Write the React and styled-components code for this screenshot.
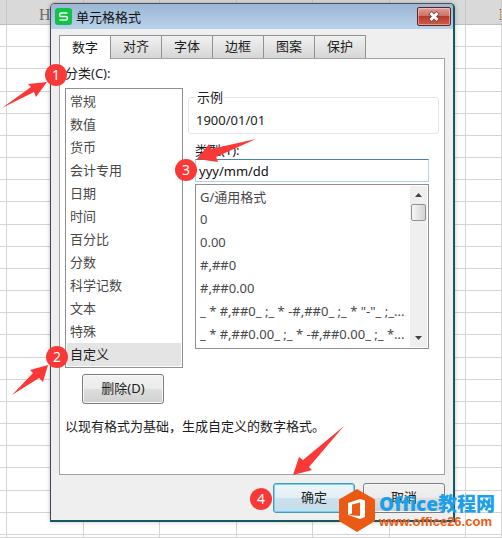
import React, { useState } from 'react';
import styled, { createGlobalStyle } from 'styled-components';

const TABS = ['数字', '对齐', '字体', '边框', '图案', '保护'];

const CATEGORIES = [
    '常规',
    '数值',
    '货币',
    '会计专用',
    '日期',
    '时间',
    '百分比',
    '分数',
    '科学记数',
    '文本',
    '特殊',
    '自定义',
];

const FORMATS = [
    'G/通用格式',
    '0',
    '0.00',
    '#,##0',
    '#,##0.00',
    '_ * #,##0_ ;_ * -#,##0_ ;_ * "-"_ ;_...',
    '_ * #,##0.00_ ;_ * -#,##0.00_ ;_ *...',
];

// 中间的列被对话框挡住，不需要列名
const COLUMNS = ['', 'H', '', '', '', '', '', 'N'];
const ROW_COUNT = 24;

const GlobalStyle = createGlobalStyle`
    * {
        box-sizing: border-box;
    }

    body {
        margin: 0;
        background: #fff;
    }

    body, button, input, select {
        font-family: 'Noto Sans', 'Noto Sans CJK SC', sans-serif;
        font-size: 13px;
        line-height: 18px;
        color: #1c1c1c;
    }
`;

const Page = styled.div`
    position: relative;
    min-height: 100vh;
    padding: 3px 47px 16px 50px;
    overflow: hidden;
`;

/* 背景工作表 */
const Sheet = styled.div`
    position: absolute;
    inset: 0;
    display: grid;
    grid-template-columns: 7px repeat(6, 1fr) 36px;
    grid-template-rows: 25px repeat(23, 1fr) 3px;
`;

const ColumnHead = styled.div`
    display: flex;
    justify-content: ${(props) => (props.$clipped ? 'flex-start' : 'center')};
    align-items: flex-end;
    overflow: hidden;
    background: #d9d9d9;
    border-bottom: 1px solid #bdbdbd;
    border-right: 1px solid #c6c6c6;
    font-family: 'Liberation Serif', serif;
    font-size: 16px;
    color: ${(props) => (props.$clipped ? '#a0543c' : '#6b6b6b')};

    span {
        flex: none;
        min-width: 77px;
        text-align: center;
    }
`;

const Cell = styled.div`
    border-right: 1px solid #d4d4d4;
    border-bottom: 1px solid #d4d4d4;
`;

const Dialog = styled.section`
    position: relative;
    border: 2px solid;
    border-color: #47535e #155865 #155865 #3f4852;
    border-top-width: 1px;
    border-left-width: 1px;
    border-radius: 5px 5px 0 0;
    background: #efefef;
    box-shadow: 0 0 4px rgba(0, 0, 0, 0.25);
`;

const TitleBar = styled.header`
    display: flex;
    align-items: center;
    gap: 4px;
    height: 25px;
    padding: 0 2px 0 4px;
    border-radius: 4px 4px 0 0;
    background: linear-gradient(#9bb7d4, #b9d1ea);

    h1 {
        flex: 1;
        margin: 0;
        font-size: 13px;
        font-weight: 400;
        color: #111;
    }
`;

const CloseButton = styled.button`
    display: flex;
    align-items: center;
    justify-content: center;
    width: 34px;
    height: 19px;
    padding: 0;
    border: 1px solid #5b2522;
    border-radius: 2px;
    box-shadow: inset 0 0 0 1px rgba(255, 220, 210, 0.5);
    background: linear-gradient(#dea094 0%, #cf7264 45%, #b93a2a 50%, #cf5b48 100%);
`;

const Body = styled.div`
    padding: 6px 8px 7px;
`;

const TabList = styled.div`
    display: flex;
    align-items: flex-end;
`;

const Tab = styled.button`
    position: relative;
    width: ${(props) => (props.$active ? '52px' : '51px')};
    height: ${(props) => (props.$active ? '24px' : '23px')};
    margin-bottom: ${(props) => (props.$active ? '-1px' : '0')};
    padding: 0 0 2px;
    border: 1px solid #929292;
    border-left-width: ${(props) => (props.$first ? '1px' : '0')};
    border-bottom: none;
    background: ${(props) => (props.$active ? '#fff' : 'linear-gradient(#f1f1f1, #d6d6d6)')};
    z-index: ${(props) => (props.$active ? 1 : 0)};
`;

const Panel = styled.div`
    padding: 5px 5px 39px;
    border: 1px solid #a2a2a2;
    background: #fff;
`;

const FieldLabel = styled.label`
    display: block;
`;

const Columns = styled.div`
    display: flex;
    align-items: flex-start;
    gap: 5px;
    margin-top: 6px;
`;

const ListBox = styled.select`
    display: block;
    flex: 1;
    min-width: 0;
    height: ${(props) => props.size * 23}px;
    padding: 0;
    border: none;
    outline: none;
    overflow: hidden;
    background: #fff;

    option {
        height: 23px;
        padding: 1px 0 3px 3px;
        line-height: 18px;
        color: #484848;
        overflow: hidden;
    }

    option:checked {
        background: linear-gradient(#e4e4e4, #e4e4e4);
        color: #1c1c1c;
    }
`;

const ListFrame = styled.div`
    display: flex;
    width: ${(props) => props.$width || 'auto'};
    padding: 1px;
    border: 1px solid #909090;
    background: #fff;
`;

const Details = styled.div`
    flex: 1;
    min-width: 0;
`;

const Sample = styled.fieldset`
    min-width: 0;
    height: 46px;
    margin: 0;
    padding: 5px 7px 0;
    border: 1px solid #dfe7ea;
    border-radius: 3px;

    legend {
        padding: 0 1px;
    }
`;

const TypeField = styled.div`
    margin: 7px 10px 0 7px;
`;

const TypeInput = styled.input`
    display: block;
    width: 100%;
    height: 23px;
    margin-bottom: 2px;
    padding: 0 3px;
    border: 1px solid #b5d3e7;
    border-top-color: #4a80b5;
    outline: none;
    color: #111;
`;

const ScrollBar = styled.div`
    display: flex;
    flex-direction: column;
    align-items: center;
    width: 17px;
    background: #efefef;
`;

const ScrollArrow = styled.button`
    display: flex;
    align-items: center;
    justify-content: center;
    width: 100%;
    height: 18px;
    padding: 0;
    border: none;
    background: transparent;
`;

const ScrollThumb = styled.div`
    width: 15px;
    height: 17px;
    margin-bottom: auto;
    border: 1px solid #929292;
    border-radius: 2px;
    background: linear-gradient(to right, #f6f6f6, #d2d2d4);
`;

const Button = styled.button`
    width: 82px;
    height: 30px;
    padding: 0 0 2px;
    border: 1px solid ${(props) => (props.$primary ? '#4399bd' : '#7c7c7c')};
    border-radius: 3px;
    box-shadow: inset 0 0 0 1px ${(props) => (props.$primary ? '#6fd3f3' : '#f8f8f8')};
    background: ${(props) =>
        props.$primary
            ? 'linear-gradient(#edf5f9 0%, #e2eff6 48%, #cbe1ed 52%, #c5dcea 100%)'
            : 'linear-gradient(#f2f2f2 0%, #ebebeb 48%, #dddddd 52%, #d0d0d0 100%)'};
`;

const DeleteRow = styled.div`
    padding: 6px 17px 13px;
`;

const Hint = styled.p`
    margin: 0;
`;

const Actions = styled.footer`
    display: flex;
    justify-content: flex-end;
    gap: 8px;
    padding-top: 8px;
`;

/* 步骤标注 */
const Arrows = styled.svg`
    position: absolute;
    top: 0;
    left: 0;
    pointer-events: none;
`;

const StepBadge = styled.span`
    position: absolute;
    top: ${(props) => props.$y}px;
    left: ${(props) => props.$x}px;
    width: 22px;
    height: 22px;
    border-radius: 50%;
    background: #fb3838;
    color: #fff;
    font-size: 14px;
    line-height: 21px;
    text-align: center;
`;

const Watermark = styled.div`
    position: absolute;
    right: 7px;
    bottom: 6px;
    display: flex;
    align-items: flex-end;
    gap: 4px;
    pointer-events: none;
`;

const WatermarkText = styled.div`
    padding-bottom: 2px;
    font-weight: 700;

    strong {
        display: block;
        font-size: 19px;
        line-height: 20px;
        color: #1b9fe8;
    }

    span {
        display: block;
        font-family: 'Liberation Sans', sans-serif;
        font-size: 13px;
        line-height: 16px;
        color: #ea5b12;
    }
`;

const AppIcon = () => (
    <svg width="17" height="17" viewBox="0 0 17 17" aria-hidden="true">
        <rect width="17" height="17" rx="3" fill="#12c148" />
        <path
            d="M12.5 5H6.2Q4.6 5 4.6 6.8T6.2 8.5H10.8Q12.4 8.5 12.4 10.2T10.8 12H4.4"
            fill="none"
            stroke="#e9ffe9"
            strokeWidth="1.7"
        />
    </svg>
);

const OfficeLogo = () => (
    <svg width="36" height="43" viewBox="0 0 36 43" aria-hidden="true">
        <path d="M18 0 36 10.5V32L18 43 0 32V10.5Z" fill="#ea5a14" />
        <path
            d="M9 14 21 10 26 11.5V28L21 30 9 26 21 27V13.5L13 15.5V24.5L9 26Z"
            fill="#fff"
        />
    </svg>
);

const App = () => {
    const [tab, setTab] = useState('数字');
    const [category, setCategory] = useState('自定义');
    const [format, setFormat] = useState('');
    const [type, setType] = useState('yyy/mm/dd');

    const handleFormatChange = (e) => {
        setFormat(e.target.value);
        setType(e.target.value);
    };

    return (
        <Page>
            <GlobalStyle />
            <Sheet aria-hidden="true">
                {COLUMNS.map((name, i) => (
                    <ColumnHead key={i} $clipped={i === COLUMNS.length - 1}>
                        {name && <span>{name}</span>}
                    </ColumnHead>
                ))}
                {Array.from({ length: ROW_COUNT * COLUMNS.length }, (_, i) => (
                    <Cell key={i} />
                ))}
            </Sheet>

            <Dialog role="dialog" aria-labelledby="dialog-title">
                <TitleBar>
                    <AppIcon />
                    <h1 id="dialog-title">单元格格式</h1>
                    <CloseButton type="button" aria-label="关闭">
                        <svg width="12" height="11" viewBox="0 0 12 11">
                            <path d="M2 1.5 10 9.5M10 1.5 2 9.5" stroke="#6d4a48" strokeWidth="4.4" />
                            <path d="M2.5 2 9.5 9M9.5 2 2.5 9" stroke="#fff" strokeWidth="2.8" />
                        </svg>
                    </CloseButton>
                </TitleBar>

                <Body>
                    <TabList role="tablist">
                        {TABS.map((name, i) => (
                            <Tab
                                key={name}
                                type="button"
                                role="tab"
                                aria-selected={tab === name}
                                $active={tab === name}
                                $first={i === 0}
                                onClick={() => setTab(name)}
                            >
                                {name}
                            </Tab>
                        ))}
                    </TabList>

                    <Panel role="tabpanel">
                        <FieldLabel htmlFor="category">分类(C):</FieldLabel>
                        <Columns>
                            <ListFrame $width="118px">
                                <ListBox
                                    id="category"
                                    size={12}
                                    value={category}
                                    onChange={(e) => setCategory(e.target.value)}
                                >
                                    {CATEGORIES.map((name) => (
                                        <option key={name}>{name}</option>
                                    ))}
                                </ListBox>
                            </ListFrame>

                            <Details>
                                <Sample>
                                    <legend>示例</legend>
                                    1900/01/01
                                </Sample>
                                <TypeField>
                                    <FieldLabel htmlFor="type">类型(T):</FieldLabel>
                                    <TypeInput
                                        id="type"
                                        value={type}
                                        onChange={(e) => setType(e.target.value)}
                                    />
                                    <ListFrame>
                                        <ListBox
                                            aria-label="类型"
                                            size={7}
                                            value={format}
                                            onChange={handleFormatChange}
                                        >
                                            {/* 初始不选中任何格式 */}
                                            <option value="" hidden />
                                            {FORMATS.map((name) => (
                                                <option key={name}>{name}</option>
                                            ))}
                                        </ListBox>
                                        <ScrollBar>
                                            <ScrollArrow type="button" aria-label="向上">
                                                <svg width="7" height="4" viewBox="0 0 7 4">
                                                    <path d="M0 4 3.5 0 7 4Z" fill="#444" />
                                                </svg>
                                            </ScrollArrow>
                                            <ScrollThumb />
                                            <ScrollArrow type="button" aria-label="向下">
                                                <svg width="7" height="4" viewBox="0 0 7 4">
                                                    <path d="M0 0 3.5 4 7 0Z" fill="#444" />
                                                </svg>
                                            </ScrollArrow>
                                        </ScrollBar>
                                    </ListFrame>
                                </TypeField>
                            </Details>
                        </Columns>
                        <DeleteRow>
                            <Button type="button">删除(D)</Button>
                        </DeleteRow>
                        <Hint>以现有格式为基础，生成自定义的数字格式。</Hint>
                    </Panel>

                    <Actions>
                        <Button type="button" $primary>
                            确定
                        </Button>
                        <Button type="button">取消</Button>
                    </Actions>
                </Body>
            </Dialog>

            <Arrows width="502" height="538" viewBox="0 0 502 538" fill="#fb3838" aria-hidden="true">
                <path d="M2 108 31 87 28 84 47 82 36 97 34 92Z" />
                <path d="M12 395 33 373 30 370 48 365 43 382 39 378Z" />
                <path d="M256 139 216 157 218 162 197 159 209 144 211 149Z" />
                <path d="M344 426 309 467 312 470 293 475 299 457 303 460Z" />
            </Arrows>
            <StepBadge $x={45} $y={64}>1</StepBadge>
            <StepBadge $x={46} $y={346}>2</StepBadge>
            <StepBadge $x={175} $y={159}>3</StepBadge>
            <StepBadge $x={250} $y={488}>4</StepBadge>

            <Watermark>
                <OfficeLogo />
                <WatermarkText>
                    <strong>Office教程网</strong>
                    <span>www.office26.com</span>
                </WatermarkText>
            </Watermark>
        </Page>
    );
};

export default App;
